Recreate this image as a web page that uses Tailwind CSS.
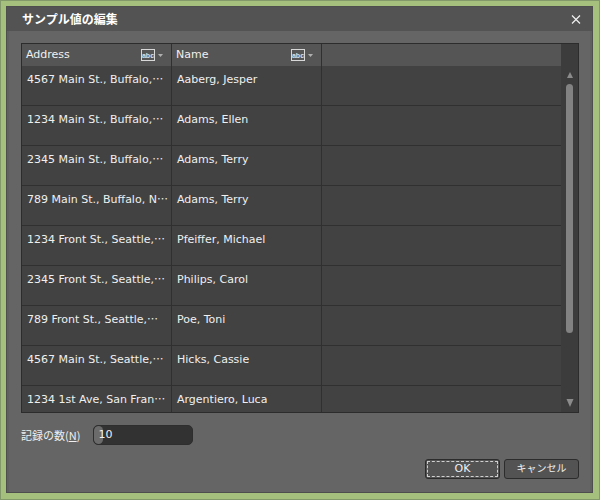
<!DOCTYPE html>
<html lang="ja">
<head>
<meta charset="utf-8">
<meta name="viewport" content="width=device-width, initial-scale=1">
<title>サンプル値の編集</title>
<script src="https://cdn.jsdelivr.net/npm/@tailwindcss/browser@4"></script>
</head>
<body class="flex h-screen flex-col border border-[#83996a] bg-[#a5c07d] p-[5px] pr-[6px] pb-[6px] font-['DejaVu_Sans','Noto_Sans_CJK_JP',sans-serif] text-[11px] leading-4 text-[#f0f0f0]">
<main role="dialog" aria-labelledby="title" class="flex min-h-0 flex-1 flex-col border border-[#4e4e4e] bg-[#656565]">
  <header class="flex h-6 shrink-0 items-center justify-between bg-[#535353] pr-2.5 pl-[15px]">
    <h1 id="title" class="font-['Noto_Sans_CJK_JP',sans-serif] text-xs font-bold text-white">サンプル値の編集</h1>
    <button type="button" aria-label="閉じる" class="flex size-3 items-center justify-center">
      <svg class="size-3" viewBox="0 0 12 12" fill="none" stroke="#f0f0f0" stroke-width="1.2"><path d="M2 2.5 10 10.5M10 2.5 2 10.5"/></svg>
    </button>
  </header>
  <form class="flex min-h-0 flex-1 flex-col border-x-2 border-[#606060] pt-3 pr-[11px] pb-[13px] pl-3">
    <div class="flex min-h-0 flex-1 border border-[#2c2c2c] bg-[#424242]">
      <div class="min-w-0 flex-1 overflow-hidden">
        <table class="w-full table-fixed border-separate border-spacing-0 text-left">
          <colgroup><col class="w-[150px]"><col class="w-[150px]"><col></colgroup>
          <thead>
            <tr class="h-[22px] bg-[#555555]">
              <th scope="col" class="border-r border-[#303030] px-1 py-0 font-normal">
                <div class="flex items-center justify-between"><span>Address</span>
                  <button type="button" aria-label="Address の種類" class="mr-1 flex items-center gap-[3px]">
                    <span class="flex h-3 w-3.5 items-center justify-center border border-[#d8d8d8] font-['Liberation_Sans',sans-serif] text-[7px] leading-none font-bold text-[#e0e0e0]">abc</span>
                    <svg class="h-[3px] w-[5px]" viewBox="0 0 5 3" fill="#b0b0b0"><path d="M0 0h5L2.5 3z"/></svg>
                  </button></div>
              </th>
              <th scope="col" class="border-r border-[#303030] px-1 py-0 font-normal">
                <div class="flex items-center justify-between"><span>Name</span>
                  <button type="button" aria-label="Name の種類" class="mr-1 flex items-center gap-[3px]">
                    <span class="flex h-3 w-3.5 items-center justify-center border border-[#d8d8d8] font-['Liberation_Sans',sans-serif] text-[7px] leading-none font-bold text-[#e0e0e0]">abc</span>
                    <svg class="h-[3px] w-[5px]" viewBox="0 0 5 3" fill="#b0b0b0"><path d="M0 0h5L2.5 3z"/></svg>
                  </button></div>
              </th>
              <td></td>
            </tr>
          </thead>
          <tbody class="align-top whitespace-nowrap [&_td]:h-10 [&_td]:border-b [&_td]:border-[#303030] [&_td]:px-[5px] [&_td]:pt-[6px] [&_td]:pb-0 [&_td:not(:last-child)]:border-r [&_span]:font-['Noto_Sans_CJK_JP',sans-serif] [&_span]:leading-none">
            <tr><td>4567 Main St., Buffalo,<span>…</span></td><td>Aaberg, Jesper</td><td></td></tr>
            <tr><td>1234 Main St., Buffalo,<span>…</span></td><td>Adams, Ellen</td><td></td></tr>
            <tr><td>2345 Main St., Buffalo,<span>…</span></td><td>Adams, Terry</td><td></td></tr>
            <tr><td>789 Main St., Buffalo, N<span>…</span></td><td>Adams, Terry</td><td></td></tr>
            <tr><td>1234 Front St., Seattle,<span>…</span></td><td>Pfeiffer, Michael</td><td></td></tr>
            <tr><td>2345 Front St., Seattle,<span>…</span></td><td>Philips, Carol</td><td></td></tr>
            <tr><td>789 Front St., Seattle,<span>…</span></td><td>Poe, Toni</td><td></td></tr>
            <tr><td>4567 Main St., Seattle,<span>…</span></td><td>Hicks, Cassie</td><td></td></tr>
            <tr><td>1234 1st Ave, San Fran<span>…</span></td><td>Argentiero, Luca</td><td></td></tr>
          </tbody>
        </table>
      </div>
      <div class="flex w-[17px] flex-col items-center bg-[#3c3c3c] pt-[27px] pb-[5px]">
        <button type="button" aria-label="上へスクロール" class="mb-[5px]"><svg class="size-2" viewBox="0 0 8 8" fill="#8b8b8b"><path d="M4 1 7 7H1z"/></svg></button>
        <div class="min-h-0 flex-1"><div class="h-[79%] w-[7px] rounded-full bg-[#828282]"></div></div>
        <button type="button" aria-label="下へスクロール"><svg class="size-2" viewBox="0 0 8 8" fill="#8b8b8b"><path d="M.5 0h7L4 8z"/></svg></button>
      </div>
    </div>
    <div class="mt-3 flex items-center gap-[13px]">
      <label for="count" class="font-['Noto_Sans_CJK_JP',sans-serif]">記録の数(<u>N</u>)</label>
      <div class="relative flex h-5 w-[100px] overflow-hidden rounded-[5px] border border-[#2e2e2e] bg-[#323232]">
        <span class="absolute inset-y-0 left-0 w-[9px] rounded-[5px] bg-[#6b6b6b]"></span>
        <input id="count" type="text" value="10" class="relative w-full bg-transparent pl-1 outline-none">
      </div>
    </div>
    <div class="mt-3.5 flex justify-end gap-1">
      <button type="submit" class="flex h-5 w-[75px] rounded-[3px] border border-[#2c2c2c] bg-[#535353] p-px"><span class="flex h-full w-full items-center justify-center border border-dashed border-[#d0d0d0]">OK</span></button>
      <button type="button" class="h-5 w-[75px] rounded-[3px] border border-[#2c2c2c] bg-[#535353] text-[10px]">キャンセル</button>
    </div>
  </form>
</main>
</body>
</html>
